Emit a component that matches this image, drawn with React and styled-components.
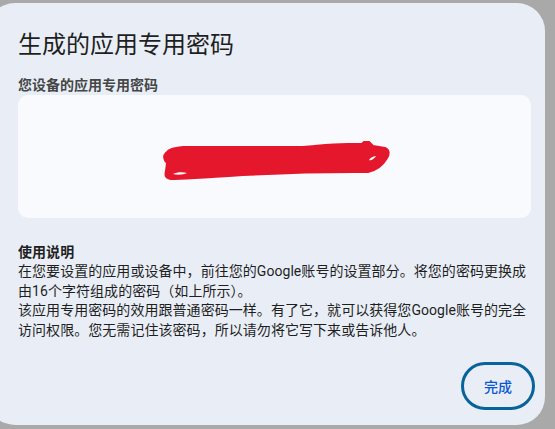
import React from 'react';
import styled, { createGlobalStyle } from 'styled-components';

const GlobalStyle = createGlobalStyle`
    html, body {
        margin: 0;
        padding: 0;
        background: #a9a9a9;
        overflow: hidden;
    }
    body {
        font-family: Roboto, "Noto Sans CJK SC", "Noto Sans", sans-serif;
    }
`;

const Page = styled.div`
    width: 555px;
    height: 429px;
    padding-top: 3px;
    box-sizing: border-box;
`;

const Dialog = styled.div`
    margin-left: -13px;
    width: 558px;
    height: 422px;
    box-sizing: border-box;
    padding: 26px 14px 15px 31px;
    background: #e9eef6;
    border-radius: 28px;
    display: flex;
    flex-direction: column;
`;

const Title = styled.h1`
    margin: 0;
    font-size: 24px;
    line-height: 32px;
    font-weight: 400;
    color: #1f1f1f;
`;

const Label = styled.div`
    margin-top: 14px;
    font-size: 14px;
    line-height: 20px;
    font-weight: 700;
    color: #444746;
`;

const PasswordBox = styled.div`
    height: 123px;
    background: #f8fafd;
    border-radius: 10px;
    display: flex;
    align-items: center;
    justify-content: center;
`;

const Scribble = styled.svg`
    margin: 11px 0 0 5px;
    display: block;
`;

const Instructions = styled.div`
    margin-top: 24px;
    font-size: 14px;
    line-height: 19.5px;
    letter-spacing: 0.05px;
    color: #1f1f1f;
`;

const Heading = styled.div`
    font-weight: 700;
    line-height: 20px;
`;

const Paragraph = styled.p`
    margin: 0;
`;

const Footer = styled.div`
    margin-top: auto;
    margin-right: -4px;
    display: flex;
    justify-content: flex-end;
`;

const DoneButton = styled.button`
    width: 74px;
    height: 48px;
    box-sizing: border-box;
    border: 3px solid #07639a;
    border-radius: 24px;
    background: transparent;
    color: #0b57d0;
    font-family: inherit;
    font-size: 14px;
    font-weight: 500;
    padding: 0;
    cursor: pointer;
`;

export default function App() {
    return (
        <Page>
            <GlobalStyle />
            <Dialog>
                <Title>生成的应用专用密码</Title>
                <Label>您设备的应用专用密码</Label>
                <PasswordBox>
                    <Scribble width="228" height="42" viewBox="0 0 228 42">
                        <path
                            d="M3 12 C6 8 10 7 20 6 L140 6 C155 5 165 3 185 3 L199 3 C201 0 205 -1 207 2 L210 5 L222 7 C227 9 226 14 224 17 C220 24 214 29 205 31 L190 31 C170 31 120 32 80 34 C50 36 20 38 8 38 C2 37 2 34 3 30 L4 22 C1 19 0 15 3 12 Z"
                            fill="#e5172d"
                            stroke="#e5172d"
                            strokeWidth="2"
                            strokeLinejoin="round"
                        />
                        <path d="M10 33 C14 31 20 31 24 32 C20 34 14 34 10 33 Z" fill="#f8fafd" />
                        <path d="M206 19 C208 16 211 15 213 15 C211 18 208 20 206 19 Z" fill="#f8fafd" />
                    </Scribble>
                </PasswordBox>
                <Instructions>
                    <Heading>使用说明</Heading>
                    <Paragraph>在您要设置的应用或设备中，前往您的Google账号的设置部分。将您的密码更换成由16个字符组成的密码（如上所示）。</Paragraph>
                    <Paragraph>该应用专用密码的效用跟普通密码一样。有了它，就可以获得您Google账号的完全访问权限。您无需记住该密码，所以请勿将它写下来或告诉他人。</Paragraph>
                </Instructions>
                <Footer>
                    <DoneButton type="button">完成</DoneButton>
                </Footer>
            </Dialog>
        </Page>
    );
}
